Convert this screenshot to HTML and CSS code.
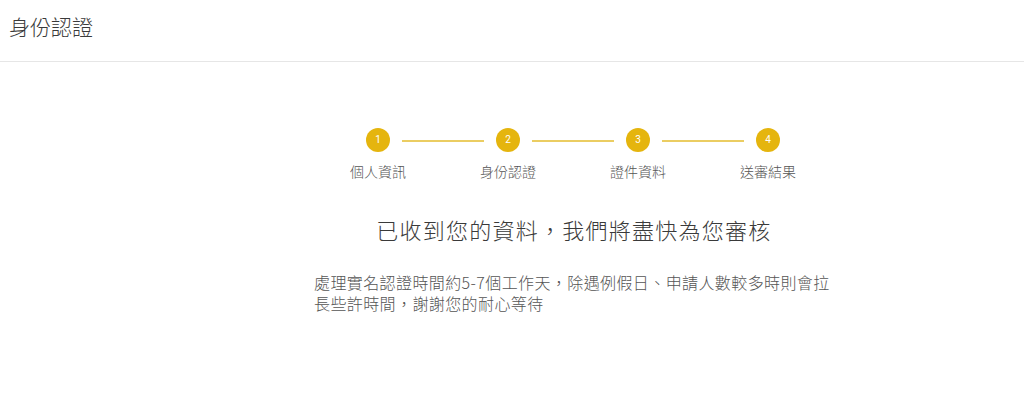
FILE: index.html
```html
<!DOCTYPE html>
<html lang="zh-Hant">
<head>
<meta charset="utf-8">
<title>身份認證</title>
<link rel="stylesheet" href="styles.css">
</head>
<body>
<header class="topbar">
  <h1 class="page-title">身份認證</h1>
</header>
<main class="page">
  <section class="content">
    <ol class="steps">
      <li class="step"><span class="step-dot">1</span><span class="step-label">個人資訊</span></li>
      <li class="step"><span class="step-dot">2</span><span class="step-label">身份認證</span></li>
      <li class="step"><span class="step-dot">3</span><span class="step-label">證件資料</span></li>
      <li class="step"><span class="step-dot">4</span><span class="step-label">送審結果</span></li>
    </ol>
    <h2 class="result-title">已收到您的資料，我們將盡快為您審核</h2>
    <p class="result-text">處理實名認證時間約5-7個工作天，除遇例假日、申請人數較多時則會拉長些許時間，謝謝您的耐心等待</p>
  </section>
</main>
</body>
</html>
```
FILE: styles.css
```css
* { box-sizing: border-box; }
html, body { margin: 0; padding: 0; background: #fff; }
body {
  font-family: "Noto Sans CJK TC", "Noto Sans", sans-serif;
  color: #333;
}
.topbar {
  height: 62px;
  padding: 11px 9px 0;
  border-bottom: 1px solid #e6e6e6;
}
.page-title {
  margin: 0;
  font-size: 21px;
  line-height: 30px;
  font-weight: 300;
  color: #3a3a3a;
}
.page {
  padding-top: 66px;
  padding-left: 313px;
}
.content {
  width: 522px;
}
.steps {
  list-style: none;
  margin: 0;
  padding: 0;
  display: flex;
}
.step {
  width: 130px;
  display: flex;
  flex-direction: column;
  align-items: center;
  position: relative;
}
.step + .step::before {
  content: "";
  position: absolute;
  top: 12px;
  left: -41px;
  width: 82px;
  height: 2px;
  background: #ebcd62;
}
.step-dot {
  width: 24px;
  height: 24px;
  border-radius: 50%;
  background: #e5b50e;
  color: #fff;
  font-family: Roboto, "Noto Sans", sans-serif;
  font-size: 10px;
  font-weight: 400;
  line-height: 24px;
  text-align: center;
}
.step-label {
  margin-top: 9px;
  font-size: 14px;
  line-height: 20px;
  font-weight: 300;
  color: #555;
  white-space: nowrap;
}
.result-title {
  margin: 32px 0 0;
  font-size: 22px;
  line-height: 32px;
  font-weight: 300;
  letter-spacing: 1.25px;
  text-align: center;
  color: #3a3a3a;
}
.result-text {
  width: 524px;
  margin: 27px 0 0 1px;
  font-size: 16px;
  line-height: 21px;
  font-weight: 300;
  letter-spacing: 0.4px;
  color: #555;
}
```
